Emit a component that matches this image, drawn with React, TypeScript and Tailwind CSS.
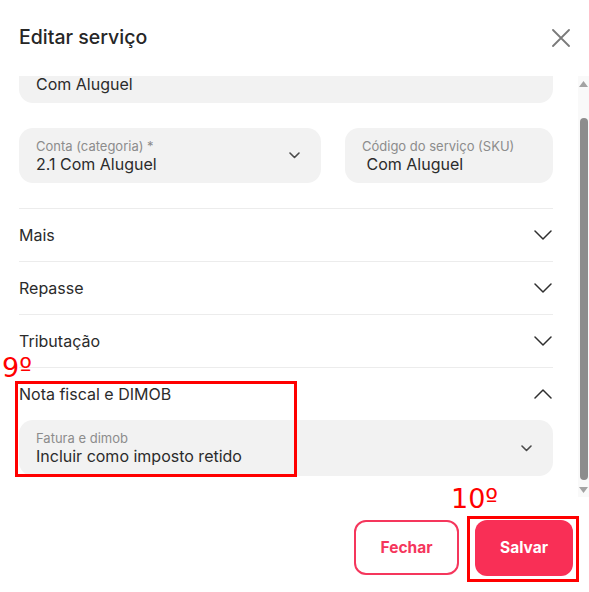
import { useEffect, useRef } from "react";

const font = { fontFamily: "Inter, 'Noto Sans', sans-serif" };

function Chevron({ up = false }: { up?: boolean }) {
  return (
    <svg width="18" height="10" viewBox="0 0 18 10" fill="none" className="shrink-0">
      <polyline
        points={up ? "1,9 9,1 17,9" : "1,1 9,9 17,1"}
        stroke="#2f2f2f"
        strokeWidth="1.5"
        strokeLinecap="round"
        strokeLinejoin="round"
      />
    </svg>
  );
}

function SmallChevron() {
  return (
    <svg width="11" height="7" viewBox="0 0 11 7" fill="none" className="shrink-0">
      <polyline points="1,1 5.5,5.5 10,1" stroke="#4a4a4a" strokeWidth="1.6" strokeLinecap="round" strokeLinejoin="round" />
    </svg>
  );
}

function Field({
  label,
  value,
  select = false,
  className = "",
}: {
  label: string;
  value: string;
  select?: boolean;
  className?: string;
}) {
  return (
    <div className={`flex h-[55px] items-center rounded-[14px] bg-[#f2f2f2] pl-[17px] pr-[21px] ${className}`}>
      <div className="flex min-w-0 flex-1 flex-col">
        <span className="text-[13px] leading-[16px] text-[#8c8c8c]">{label}</span>
        <span className="text-[16px] leading-[20px] text-[#2b2b2b]">{value}</span>
      </div>
      {select && <SmallChevron />}
    </div>
  );
}

function AccordionRow({ title, open = false }: { title: string; open?: boolean }) {
  return (
    <div className="flex h-[53px] items-center justify-between border-t border-[#ececec] pr-[1px]">
      <span className="text-[16px] text-[#2b2b2b]">{title}</span>
      <Chevron up={open} />
    </div>
  );
}

function ScrollRail() {
  return (
    <div className="flex w-[11px] shrink-0 flex-col items-center bg-[#f9f9f9] py-[4px]">
      <svg width="9" height="6" viewBox="0 0 9 6" className="mt-[1px] shrink-0">
        <polygon points="4.5,0 9,6 0,6" fill="#a3a3a3" />
      </svg>
      <div className="mt-[31px] h-[365px] w-[8px] rounded-full bg-[#8d8d8d]" />
      <svg width="9" height="6" viewBox="0 0 9 6" className="mt-[7px] shrink-0">
        <polygon points="0,0 9,0 4.5,6" fill="#a3a3a3" />
      </svg>
    </div>
  );
}

export default function App() {
  const scrollRef = useRef<HTMLDivElement>(null);

  useEffect(() => {
    if (scrollRef.current) scrollRef.current.scrollTop = 9999;
  }, []);

  return (
    <div className="relative flex h-[592px] w-[589px] flex-col overflow-hidden bg-white" style={font}>
      <div className="flex h-[76px] shrink-0 items-center justify-between pl-[19px] pr-[19px]">
        <h1 className="text-[19.5px] font-medium text-[#262626]">Editar serviço</h1>
        <svg width="18" height="18" viewBox="0 0 18 18" fill="none">
          <path d="M1 1L17 17M17 1L1 17" stroke="#7a7a7a" strokeWidth="1.8" strokeLinecap="round" />
        </svg>
      </div>

      <div className="flex h-[421px] shrink-0">
        <div ref={scrollRef} className="min-w-0 flex-1 overflow-hidden pl-[19px] pr-[25px]">
          <div className="flex flex-col pb-[21px]">
            <Field label="Nome do serviço *" value="Com Aluguel" />
            <div className="mt-[25px] flex gap-[24px]">
              <Field label="Conta (categoria) *" value="2.1 Com Aluguel" select className="w-[302px]" />
              <Field label="Código do serviço (SKU)" value=" Com Aluguel" className="flex-1 whitespace-pre" />
            </div>
            <div className="mt-[25px] flex flex-col">
              <AccordionRow title="Mais" />
              <AccordionRow title="Repasse" />
              <AccordionRow title="Tributação" />
              <AccordionRow title="Nota fiscal e DIMOB" open />
              <Field label="Fatura e dimob" value="Incluir como imposto retido" select className="h-[56px]" />
            </div>
          </div>
        </div>
        <ScrollRail />
      </div>

      <div className="flex flex-1 items-start justify-end gap-[16px] pr-[16px] pt-[23px]">
        <button className="h-[55px] w-[105px] rounded-[12px] border-2 border-[#f5365c] text-[15.5px] font-bold text-[#f5365c]">
          Fechar
        </button>
        <button className="h-[56px] w-[98px] rounded-[12px] bg-[#f92f56] text-[15.5px] font-bold text-white">
          Salvar
        </button>
      </div>

      <span
        className="absolute left-[2px] top-[352px] text-[27px] leading-[32px] text-[#ff0000]"
        style={{ fontFamily: "'DejaVu Sans', sans-serif" }}
      >
        9º
      </span>
      <div className="absolute left-[15px] top-[381px] h-[96px] w-[282px] border-[3px] border-[#ff0000]" />
      <span
        className="absolute left-[451px] top-[483px] text-[27px] leading-[32px] text-[#ff0000]"
        style={{ fontFamily: "'DejaVu Sans', sans-serif" }}
      >
        10º
      </span>
      <div className="absolute left-[467px] top-[516px] h-[66px] w-[112px] border-[3px] border-[#ff0000]" />
    </div>
  );
}
